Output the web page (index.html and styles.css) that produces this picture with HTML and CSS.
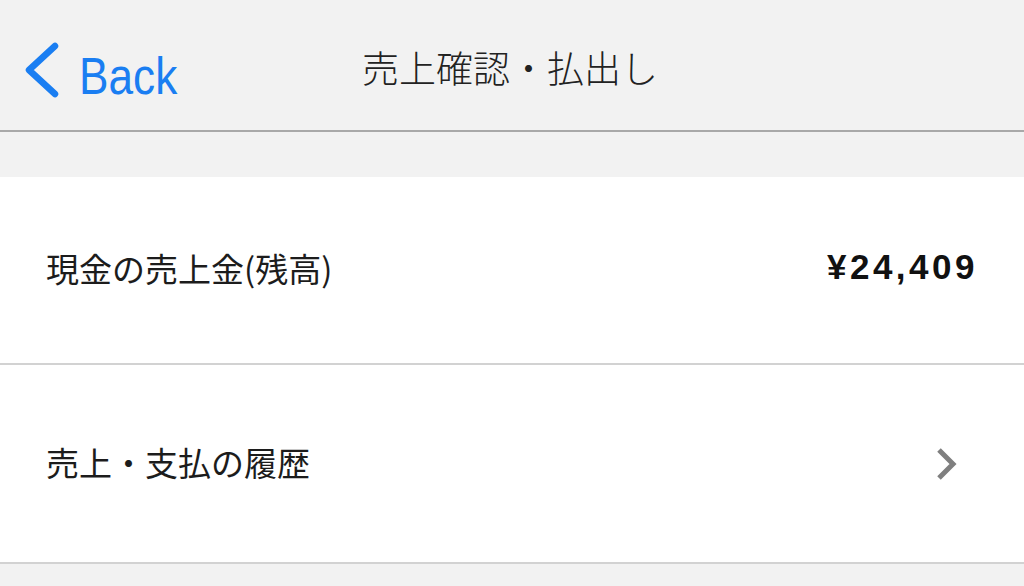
FILE: index.html
```html
<!DOCTYPE html>
<html lang="ja">
<head>
<meta charset="utf-8">
<title>売上確認・払出し</title>
<link rel="stylesheet" href="styles.css">
</head>
<body>
<header class="nav">
  <a class="back" href="#">
    <svg class="back-icon" width="34" height="56" viewBox="0 0 34 56">
      <polyline points="30,4 4,28 30,52" fill="none" stroke="#1a7ef2" stroke-width="6.5" stroke-linecap="round" stroke-linejoin="round"/>
    </svg>
    <span class="back-text">Back</span>
  </a>
  <h1 class="title">売上確認・払出し</h1>
  <div class="spacer"></div>
</header>
<div class="band"></div>
<ul class="list">
  <li class="row row-balance">
    <span class="label">現金の売上金(残高)</span>
    <span class="amount">¥24,409</span>
  </li>
  <li class="row row-history">
    <span class="label">売上・支払の履歴</span>
    <svg class="chev" width="22" height="34" viewBox="0 0 22 34">
      <polyline points="3,3 17,17 3,31" fill="none" stroke="#7f7f7f" stroke-width="5" stroke-linejoin="miter"/>
    </svg>
  </li>
</ul>
</body>
</html>
```
FILE: styles.css
```css
html, body {
  margin: 0;
  padding: 0;
}
body {
  background: #f2f2f2;
  font-family: "Noto Sans CJK JP", "Liberation Sans", sans-serif;
  color: #1c1c1c;
  width: 1024px;
  height: 586px;
  overflow: hidden;
}
.nav {
  box-sizing: border-box;
  height: 132px;
  padding-top: 10px;
  border-bottom: 2px solid #a9a9a9;
  background: #f2f2f2;
  display: grid;
  grid-template-columns: 1fr auto 1fr;
  align-items: center;
}
.back {
  display: flex;
  align-items: center;
  text-decoration: none;
  padding-left: 25px;
  color: #1a7ef2;
}
.back-icon {
  display: block;
  flex: none;
}
.back-text {
  display: inline-block;
  font-family: "Liberation Sans", "Helvetica", sans-serif;
  font-size: 52px;
  line-height: 1;
  margin-left: 20px;
  padding-top: 11px;
  transform: scaleX(0.85);
  transform-origin: left center;
}
.title {
  margin: 0 0 6px 0;
  font-size: 37px;
  font-weight: 300;
  line-height: 1;
  color: #222;
  white-space: nowrap;
  transform: translateX(-2px);
}
.band {
  height: 45px;
}
.list {
  list-style: none;
  margin: 0;
  padding: 0;
  background: #fff;
}
.row {
  box-sizing: border-box;
  display: flex;
  align-items: center;
  justify-content: space-between;
  border-bottom: 2px solid #d2d2d2;
  padding-left: 46px;
}
.row-balance {
  height: 188px;
  padding-right: 46px;
}
.row-history {
  height: 199px;
  padding-right: 66px;
}
.label {
  font-size: 33px;
  line-height: 1;
  margin-bottom: 3px;
  color: #1c1c1c;
}
.amount {
  font-family: "Liberation Sans", "Helvetica", sans-serif;
  font-weight: bold;
  font-size: 35px;
  letter-spacing: 3.5px;
  line-height: 1;
  margin-bottom: 8px;
  color: #111;
}
.chev {
  display: block;
  flex: none;
}
```
